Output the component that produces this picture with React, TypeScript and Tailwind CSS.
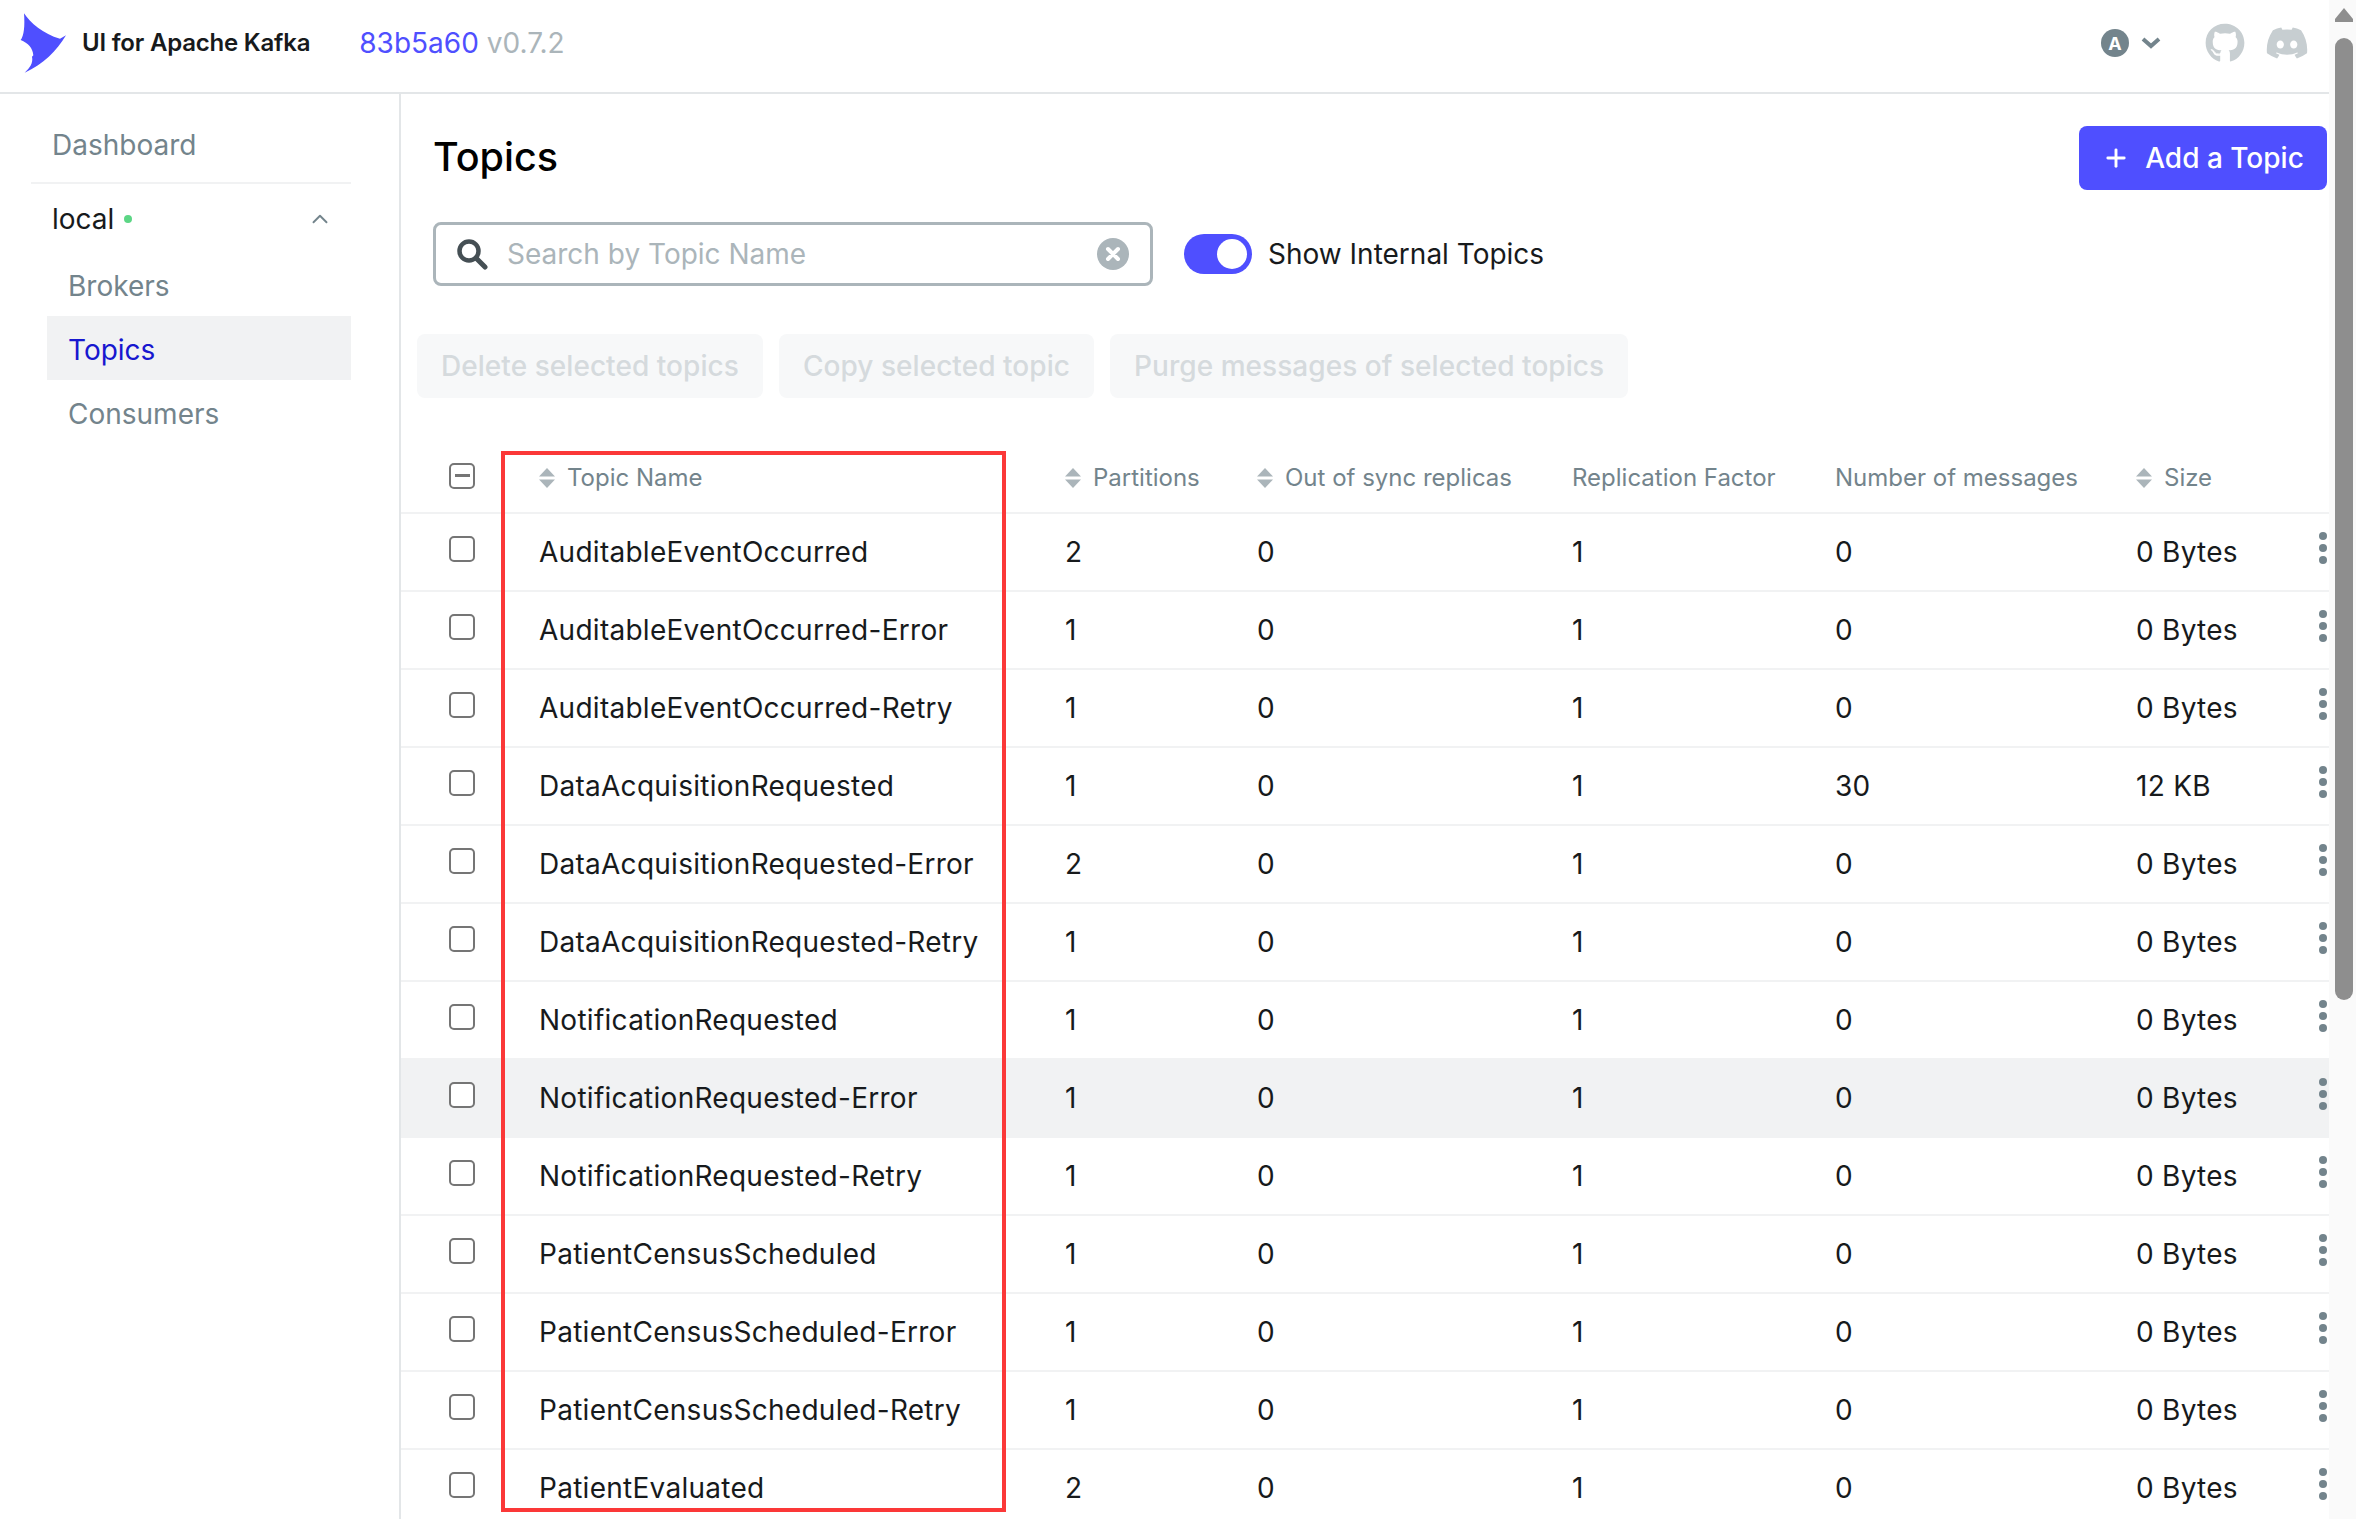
import { ChevronUp, Plus } from "lucide-react";
import { FaDiscord, FaGithub } from "react-icons/fa";

const topics = [
  ["AuditableEventOccurred", "2", "0", "1", "0", "0 Bytes"],
  ["AuditableEventOccurred-Error", "1", "0", "1", "0", "0 Bytes"],
  ["AuditableEventOccurred-Retry", "1", "0", "1", "0", "0 Bytes"],
  ["DataAcquisitionRequested", "1", "0", "1", "30", "12 KB"],
  ["DataAcquisitionRequested-Error", "2", "0", "1", "0", "0 Bytes"],
  ["DataAcquisitionRequested-Retry", "1", "0", "1", "0", "0 Bytes"],
  ["NotificationRequested", "1", "0", "1", "0", "0 Bytes"],
  ["NotificationRequested-Error", "1", "0", "1", "0", "0 Bytes"],
  ["NotificationRequested-Retry", "1", "0", "1", "0", "0 Bytes"],
  ["PatientCensusScheduled", "1", "0", "1", "0", "0 Bytes"],
  ["PatientCensusScheduled-Error", "1", "0", "1", "0", "0 Bytes"],
  ["PatientCensusScheduled-Retry", "1", "0", "1", "0", "0 Bytes"],
  ["PatientEvaluated", "2", "0", "1", "0", "0 Bytes"],
];

const SortIcon = () => (
  <svg width="16" height="20" viewBox="0 0 16 20" className="shrink-0">
    <path d="M8 0L16 8.500H0Z" fill="#ABB5BA" />
    <path d="M8 20L0 11.500H16Z" fill="#ABB5BA" />
  </svg>
);

const Logo = () => (
  <svg width="70" height="75" viewBox="0 0 210 225" className="shrink-0">
    <path
      d="M42 22C60 50 100 85 150 98L168 88C140 135 100 175 44 200C60 185 70 170 66 152L70 148C68 125 55 112 32 102C42 90 45 60 42 22Z"
      fill="#4F4FFF"
    />
  </svg>
);

const Checkbox = ({ mixed }: { mixed?: boolean }) => (
  <span className="flex h-[26px] w-[26px] items-center justify-center rounded-[5px] border-[2.5px] border-[#757575] bg-white">
    {mixed && <span className="h-[3px] w-[15px] bg-[#757575]" />}
  </span>
);

const Dots = () => (
  <div className="flex flex-col items-center gap-1">
    <span className="h-2 w-2 rounded-full bg-[#73848C]" />
    <span className="h-2 w-2 rounded-full bg-[#73848C]" />
    <span className="h-2 w-2 rounded-full bg-[#73848C]" />
  </div>
);

const HeadCell = ({ label, sort }: { label: string; sort?: boolean }) => (
  <th className="border-b-2 border-[#F1F2F3] p-0 pt-[1px] text-left font-normal">
    <div className="flex items-center gap-3 text-[24px] text-[#73848C]">
      {sort && <SortIcon />}
      <span>{label}</span>
    </div>
  </th>
);

const App = () => {
  return (
    <div className="flex h-screen overflow-hidden bg-white font-['Inter',sans-serif]">
      <div className="flex min-w-0 flex-1 flex-col">
        {/* Top bar */}
        <header className="flex h-[94px] shrink-0 items-center border-b-2 border-[#E3E6E8] pb-[6px] pl-[10px] pr-[20px]">
          <Logo />
          <span className="ml-[2px] text-[24px] font-semibold tracking-[-0.2px] text-[#171A1C]">UI for Apache Kafka</span>
          <span className="ml-[49px] text-[28px] text-[#4F4FFF]">83b5a60</span>
          <span className="ml-2 text-[28px] text-[#ABB5BA]">v0.7.2</span>
          <div className="ml-auto flex items-center">
            <span className="flex h-7 w-7 items-center justify-center rounded-full bg-[#73848C] text-[18px] font-bold text-white">
              A
            </span>
            <svg width="20" height="12" viewBox="0 0 20 12" className="ml-3">
              <path d="M2 2L10 9L18 2" fill="none" stroke="#73848C" strokeWidth="4" />
            </svg>
            <FaGithub size={40} color="#C7CED1" className="ml-[44px]" />
            <FaDiscord size={44} color="#C7CED1" className="ml-[20px]" />
          </div>
        </header>

        <div className="flex min-h-0 flex-1">
          {/* Sidebar */}
          <aside className="w-[401px] shrink-0 border-r-2 border-[#E3E6E8] pl-[31px] pr-[48px] text-[28px]">
            <div className="flex h-[90px] items-center border-b-2 border-[#F1F2F3] pl-[21px] pt-[14px] text-[#73848C]">
              Dashboard
            </div>
            <div className="flex h-[62px] items-center pl-[21px] pr-[18px] pt-[8px] text-[#171A1C]">
              local
              <span className="ml-[10px] h-2 w-2 rounded-full bg-[#5CD685]" />
              <ChevronUp size={26} strokeWidth={1.75} color="#73848C" className="ml-auto" />
            </div>
            <div className="mt-[6px] pl-[16px]">
              <div className="flex h-[64px] items-center pl-[21px] pt-[3px] text-[#73848C]">Brokers</div>
              <div className="flex h-[64px] items-center bg-[#F1F2F3] pl-[21px] pt-[3px] text-[#1717CF]">Topics</div>
              <div className="flex h-[64px] items-center pl-[21px] pt-[3px] text-[#73848C]">Consumers</div>
            </div>
          </aside>

          {/* Main content */}
          <main className="relative min-w-0 flex-1 overflow-hidden">
            <div className="mt-8 flex h-16 items-center justify-between pl-[32px] pr-[2px]">
              <h1 className="text-[39.5px] font-medium text-black">Topics</h1>
              <button className="flex h-16 w-[248px] items-center justify-center gap-[15px] rounded-lg bg-[#4F4FFF] text-[28px] font-medium text-white">
                <Plus size={28} strokeWidth={2.5} />
                Add a Topic
              </button>
            </div>

            <div className="mt-8 flex h-16 items-center pl-[32px]">
              <div className="flex h-16 w-[720px] items-center rounded-lg border-[3px] border-[#ABB5BA] pl-[20px] pr-[21px]">
                <svg width="32" height="32" viewBox="0 0 32 32" className="shrink-0">
                  <circle cx="13" cy="13" r="9.500" fill="none" stroke="#454F54" strokeWidth="4.500" />
                  <path d="M20 20L29 29" stroke="#454F54" strokeWidth="5" strokeLinecap="round" />
                </svg>
                <input
                  placeholder="Search by Topic Name"
                  className="ml-[19px] min-w-0 flex-1 bg-transparent text-[28px] outline-none placeholder:text-[#ABB5BA]"
                />
                <svg width="32" height="32" viewBox="0 0 32 32" className="shrink-0">
                  <circle cx="16" cy="16" r="16" fill="#ABB5BA" />
                  <path d="M11 11L21 21M21 11L11 21" stroke="white" strokeWidth="4" strokeLinecap="round" />
                </svg>
              </div>
              <span className="relative ml-[31px] h-10 w-[68px] rounded-full bg-[#4F4FFF]">
                <span className="absolute right-[5px] top-[5px] h-[30px] w-[30px] rounded-full bg-white" />
              </span>
              <span className="ml-4 text-[28px] text-[#171A1C]">Show Internal Topics</span>
            </div>

            <div className="mt-12 flex gap-4 pl-[16px]">
              {["Delete selected topics", "Copy selected topic", "Purge messages of selected topics"].map((label) => (
                <button
                  key={label}
                  className="h-16 rounded-lg bg-[#F7F8F9] px-6 text-[28px] font-medium tracking-[0.05px] text-[#D5DADD]"
                >
                  {label}
                </button>
              ))}
            </div>

            <table className="mt-[45px] w-full table-fixed border-separate border-spacing-0">
              <colgroup>
                <col className="w-[138px]" />
                <col className="w-[526px]" />
                <col className="w-[192px]" />
                <col className="w-[315px]" />
                <col className="w-[263px]" />
                <col className="w-[301px]" />
                <col className="w-[160px]" />
                <col />
              </colgroup>
              <thead>
                <tr className="h-[71px]">
                  <th className="border-b-2 border-[#F1F2F3] p-0 pl-[48px] font-normal">
                    <div className="-mt-[4px]">
                      <Checkbox mixed />
                    </div>
                  </th>
                  <HeadCell label="Topic Name" sort />
                  <HeadCell label="Partitions" sort />
                  <HeadCell label="Out of sync replicas" sort />
                  <HeadCell label="Replication Factor" />
                  <HeadCell label="Number of messages" />
                  <HeadCell label="Size" sort />
                  <th className="border-b-2 border-[#F1F2F3] p-0" />
                </tr>
              </thead>
              <tbody>
                {topics.map((row, i) => (
                  <tr key={row[0]} className={i === 7 ? "h-[78px] bg-[#F1F2F3]" : "h-[78px]"}>
                    <td className="border-b-2 border-[#F1F2F3] p-0 pl-[48px]">
                      <div className="-mt-[7px]">
                        <Checkbox />
                      </div>
                    </td>
                    {row.map((value, j) => (
                      <td
                        key={j}
                        className="border-b-2 border-[#F1F2F3] p-0 text-[28px] tracking-[0.27px] text-[#171A1C]"
                      >
                        {value}
                      </td>
                    ))}
                    <td className="border-b-2 border-[#F1F2F3] p-0 pl-[20px]">
                      <div className="-mt-[8px]">
                        <Dots />
                      </div>
                    </td>
                  </tr>
                ))}
              </tbody>
            </table>

            {/* annotation drawn over the first column */}
            <div className="pointer-events-none absolute left-[100px] top-[357px] h-[1061px] w-[505px] border-4 border-[#FB3838]" />
          </main>
        </div>
      </div>

      {/* Browser scrollbar */}
      <div className="flex w-[27px] shrink-0 flex-col items-center bg-[#FAFAFA] pl-[3px] pt-[8px]">
        <svg width="18" height="14" viewBox="0 0 18 14" className="shrink-0">
          <path d="M9 0L18 11V14H0V11Z" fill="#8E8E8E" />
        </svg>
        <div className="mt-[16px] h-[962px] w-[18px] rounded-full bg-[#8E8E8E]" />
      </div>
    </div>
  );
};

export default App;
